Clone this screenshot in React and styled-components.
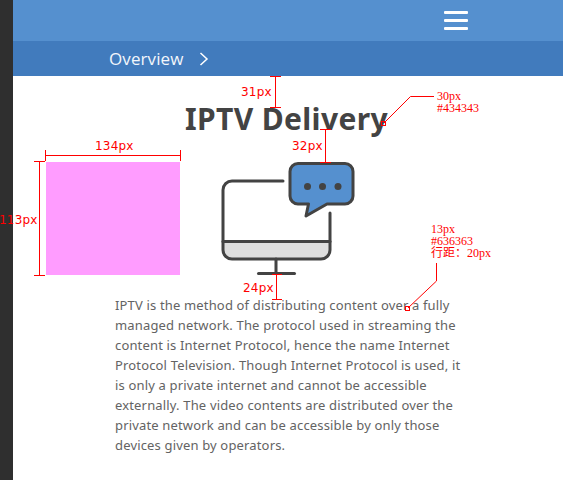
import React from "react"
import styled, { createGlobalStyle } from "styled-components"

const GlobalStyle = createGlobalStyle`
  html, body {
    margin: 0;
    padding: 0;
    background: #fff;
  }
`

const RED = "#f00"

function MonitorIcon() {
  return (
    <svg width="140" height="113" viewBox="218 162 140 113" fill="none">
      <path d="M223 243 H330 V250 a9 9 0 0 1 -9 9 H232 a9 9 0 0 1 -9 -9 Z" fill="#dedede" />
      <g stroke="#434343" strokeWidth="3" strokeLinecap="round" strokeLinejoin="round">
        <path d="M283 181 H232 a9 9 0 0 0 -9 9 V250 a9 9 0 0 0 9 9 H321 a9 9 0 0 0 9 -9 V213" />
        <path d="M223 241.5 H330" />
        <path d="M276 259 V273" />
        <path d="M258.500 273.500 H294.500" />
        <path
          d="M298 163.500 H345 a8 8 0 0 1 8 8 V196 a8 8 0 0 1 -8 8 H327 L306 216 L308.500 204 H298 a8 8 0 0 1 -8 -8 V171.500 a8 8 0 0 1 8 -8 Z"
          fill="#5590cf"
        />
      </g>
      <g fill="#434343">
        <circle cx="307.500" cy="186.500" r="3.500" />
        <circle cx="322.500" cy="186.500" r="3.500" />
        <circle cx="338" cy="186.500" r="3.500" />
      </g>
    </svg>
  )
}

function Overlay() {
  return (
    <Marks width="563" height="480" viewBox="0 0 563 480" fill="none" stroke={RED}>
      <path d="M275.500 76 V107.500 M270 76.500 H281 M270 107.500 H281" />
      <path d="M325.500 129 V162.500 M320 129.500 H331 M320 162.500 H331" />
      <path d="M276.500 274 V299 M272 274.500 H282 M272 299.500 H282" />
      <path d="M45.500 150 V161 M180.500 150 V161 M45.500 155.500 H180.500" />
      <path d="M34 161.500 H45 M34 275.500 H45 M39.500 161.500 V275.500" />
      <path d="M384 123 L410.500 96.500 H434" />
      <rect x="381.500" y="121.500" width="4" height="4" />
      <path d="M436.500 263 V281 L408 308" />
      <rect x="405.500" y="306.500" width="4" height="4" />
    </Marks>
  )
}

export default function App() {
  return (
    <>
      <GlobalStyle />
      <Page>
        <Rail />
        <Main>
          <TopBar>
            <Burger>
              <span />
              <span />
              <span />
            </Burger>
          </TopBar>
          <SubBar>
            <Crumb>Overview</Crumb>
            <Chevron width="10" height="14" viewBox="0 0 10 14" fill="none">
              <path d="M1.500 1 L8 7 L1.500 13" stroke="#fff" strokeWidth="1.500" />
            </Chevron>
          </SubBar>
          <Content>
            <Title>IPTV Delivery</Title>
            <Figures>
              <Swatch />
              <MonitorIcon />
            </Figures>
            <Body>
              IPTV is the method of distributing content over a fully managed network. The protocol
              used in streaming the content is Internet Protocol, hence the name Internet Protocol
              Television. Though Internet Protocol is used, it is only a private internet and cannot
              be accessible externally. The video contents are distributed over the private network
              and can be accessible by only those devices given by operators.
            </Body>
          </Content>
        </Main>
        <Overlay />
        <Size $x={241} $y={84}>31px</Size>
        <Size $x={292} $y={138}>32px</Size>
        <Size $x={243} $y={280}>24px</Size>
        <Size $x={95} $y={138}>134px</Size>
        <Size $x={-1} $y={212}>113px</Size>
        <Note $x={437} $y={90}>
          30px
          <br />
          #434343
        </Note>
        <Note $x={431} $y={223}>
          13px
          <br />
          #636363
          <br />
          行距：20px
        </Note>
      </Page>
    </>
  )
}

const Page = styled.div`
  position: relative;
  display: flex;
  width: 563px;
  height: 480px;
  overflow: hidden;
`

const Rail = styled.div`
  flex: 0 0 13px;
  background: #2f2f2f;
`

const Main = styled.div`
  flex: 1;
  display: flex;
  flex-direction: column;
`

const TopBar = styled.div`
  height: 41px;
  background: #5590cf;
  display: flex;
  align-items: center;
  justify-content: flex-end;
  padding-right: 95px;
`

const Burger = styled.div`
  display: flex;
  flex-direction: column;
  gap: 5px;
  width: 24px;

  span {
    display: block;
    height: 3px;
    border-radius: 1px;
    background: #fff;
  }
`

const SubBar = styled.div`
  height: 35px;
  background: #417bbd;
  display: flex;
  align-items: center;
  padding-left: 96px;
`

const Crumb = styled.span`
  font-family: "Open Sans", "Noto Sans", sans-serif;
  font-size: 17px;
  letter-spacing: 0.1px;
  color: #f2f6fb;
`

const Chevron = styled.svg`
  margin-left: 15px;
`

const Content = styled.div`
  display: flex;
  flex-direction: column;
`

const Title = styled.h1`
  margin: 24px 0 0;
  height: 62px;
  font-family: "Noto Sans", "Open Sans", sans-serif;
  font-size: 30px;
  font-weight: 700;
  line-height: 38px;
  letter-spacing: 0.35px;
  color: #434343;
  text-align: center;
  padding-right: 3px;
`

const Figures = styled.div`
  display: flex;
  gap: 38px;
  padding-left: 33px;
`

const Swatch = styled.div`
  width: 134px;
  height: 113px;
  background: #ff9cff;
`

const Body = styled.p`
  margin: 20px 0 0 102px;
  width: 350px;
  font-family: "Noto Sans", "Open Sans", sans-serif;
  font-size: 13px;
  line-height: 20px;
  letter-spacing: 0.16px;
  color: #636363;
`

const Marks = styled.svg`
  position: absolute;
  left: 0;
  top: 0;
  pointer-events: none;
`

const Size = styled.span`
  position: absolute;
  left: ${(p) => p.$x}px;
  top: ${(p) => p.$y}px;
  font-family: "DejaVu Sans", sans-serif;
  font-size: 12px;
  letter-spacing: 0.2px;
  line-height: 16px;
  color: ${RED};
`

const Note = styled.div`
  position: absolute;
  left: ${(p) => p.$x}px;
  top: ${(p) => p.$y}px;
  font-family: "Liberation Serif", "Noto Sans CJK SC", serif;
  font-size: 12px;
  line-height: 12px;
  color: ${RED};
  white-space: nowrap;
`
